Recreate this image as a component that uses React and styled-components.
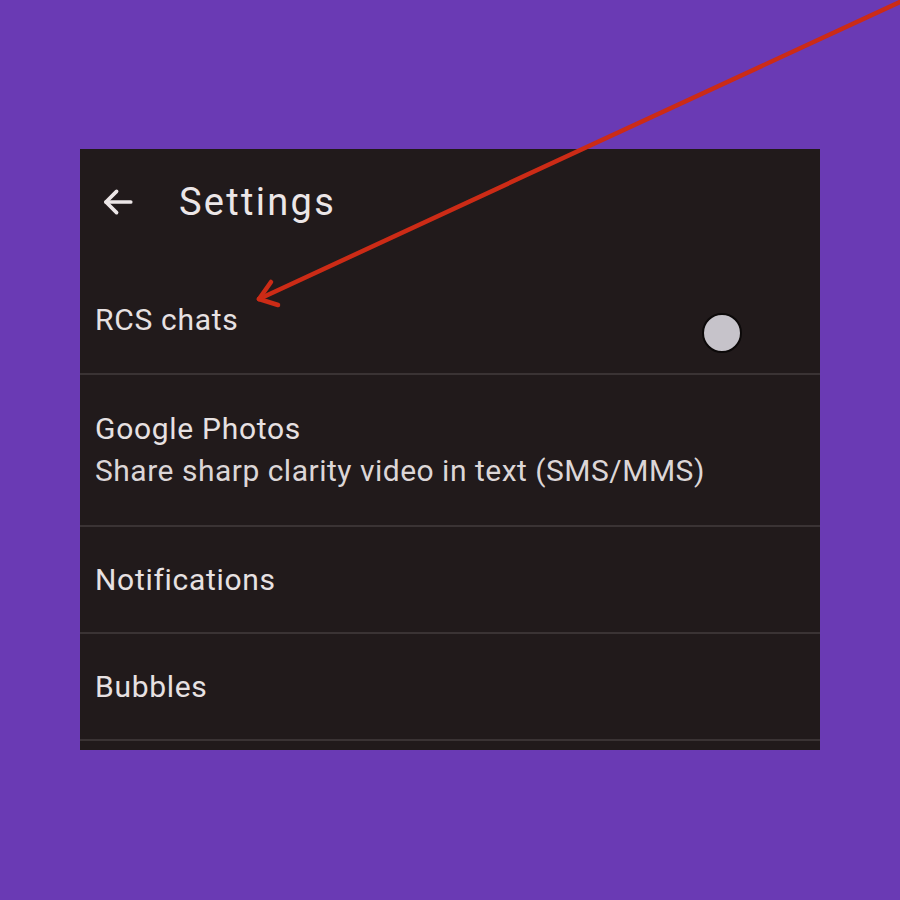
import React from "react";
import styled, { createGlobalStyle } from "styled-components";

const Global = createGlobalStyle`
  html, body { margin: 0; padding: 0; }
  body {
    background: #6a3ab4;
    width: 900px;
    height: 900px;
    overflow: hidden;
    font-family: Roboto, "Noto Sans", "Liberation Sans", sans-serif;
  }
`;

const Stage = styled.div`
  position: relative;
  width: 900px;
  height: 900px;
  padding-top: 149px;
  box-sizing: border-box;
`;

const Panel = styled.div`
  margin-left: 80px;
  width: 740px;
  height: 601px;
  background: #211a1b;
  color: #e7e1e2;
  overflow: hidden;
  display: flex;
  flex-direction: column;
`;

const Header = styled.div`
  height: 112px;
  display: flex;
  align-items: center;
  padding: 0 0 6px 21px;
  gap: 44px;
  box-sizing: border-box;
`;

const Title = styled.h1`
  margin: 0;
  font-size: 38px;
  font-weight: 400;
  letter-spacing: 2.3px;
  color: #ece6e7;
`;

const Row = styled.div`
  height: ${(p) => p.$h}px;
  display: flex;
  align-items: ${(p) => (p.$top ? "flex-start" : "center")};
  justify-content: space-between;
  padding: ${(p) => (p.$top ? "42px 78px 0 15px" : "0 15px")};
  box-sizing: border-box;
  border-bottom: 2px solid #3a3334;
`;

const Texts = styled.div`
  display: flex;
  flex-direction: column;
  gap: 8px;
`;

const Label = styled.div`
  font-size: 30px;
  line-height: 34px;
  letter-spacing: 0.7px;
  color: #e7e1e2;
`;

const Sub = styled(Label)`
  letter-spacing: 0.5px;
  color: #dcd6d7;
`;

const Knob = styled.div`
  width: 40px;
  height: 40px;
  border-radius: 50%;
  background: #c6c3ca;
  border: 2px solid #0c0909;
  box-sizing: border-box;
  margin-top: 10px;
`;

const Overlay = styled.svg`
  position: absolute;
  left: 0;
  top: 0;
  pointer-events: none;
`;

function BackArrow() {
  return (
    <svg width="34" height="34" viewBox="0 0 24 24" fill="none" stroke="#ece6e7" strokeWidth="2.6" strokeLinecap="round" strokeLinejoin="round">
      <path d="M21 12H3.5" />
      <path d="M11 4.5L3.5 12l7.5 7.5" />
    </svg>
  );
}

export default function App() {
  return (
    <>
      <Global />
      <Stage>
        <Panel>
          <Header>
            <BackArrow />
            <Title>Settings</Title>
          </Header>
          <Row $h={114} $top>
            <Label>RCS chats</Label>
            <Knob />
          </Row>
          <Row $h={152}>
            <Texts>
              <Label>Google Photos</Label>
              <Sub>Share sharp clarity video in text (SMS/MMS)</Sub>
            </Texts>
          </Row>
          <Row $h={107}>
            <Label>Notifications</Label>
          </Row>
          <Row $h={107}>
            <Label>Bubbles</Label>
          </Row>
        </Panel>
        <Overlay width="900" height="900" viewBox="0 0 900 900">
          <g stroke="#cc2b16" strokeWidth="4.5" strokeLinecap="round" fill="none">
            <path d="M902 1L259 299" />
            <path d="M259 299L271 282" />
            <path d="M259 299L278 305" />
          </g>
        </Overlay>
      </Stage>
    </>
  );
}
